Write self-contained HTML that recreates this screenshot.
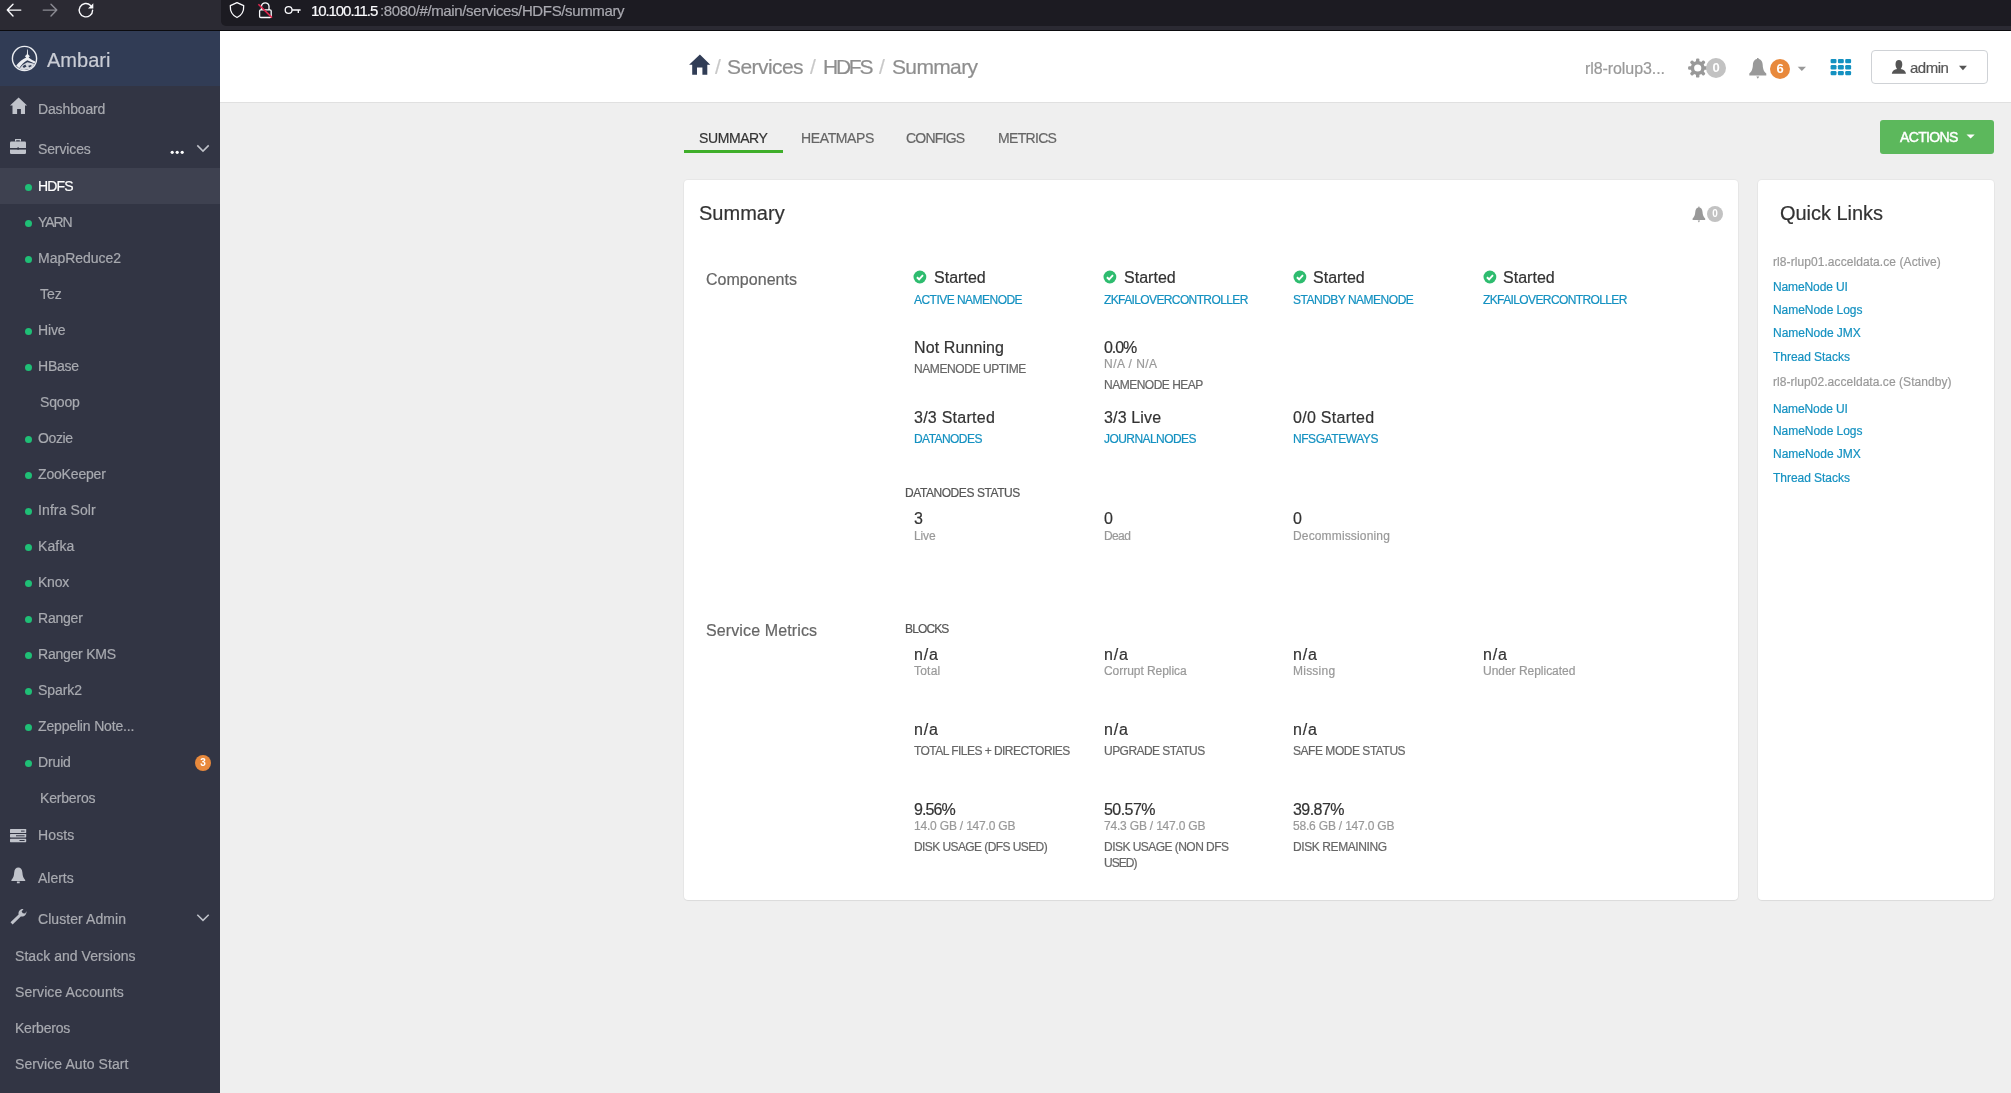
<!DOCTYPE html>
<html><head><meta charset="utf-8"><style>
html,body{margin:0;padding:0;width:2011px;height:1093px;overflow:hidden;background:#efefef;}
body{position:relative;font-family:"Liberation Sans",sans-serif;}
.t{position:absolute;line-height:1;white-space:nowrap;will-change:transform;-webkit-text-stroke:0.2px currentColor;}
svg{position:absolute;}
</style></head><body>
<div style="position:absolute;left:0px;top:0px;width:2011px;height:31px;background:#2b2a33;"></div>
<div style="position:absolute;left:221px;top:0px;width:1790px;height:26px;background:#1c1b22;border-bottom-left-radius:5px;"></div>
<div style="position:absolute;left:0px;top:30px;width:2011px;height:1px;background:#0b0b0e;"></div>
<div style="position:absolute;left:220px;top:31px;width:1791px;height:1062px;background:#efefef;"></div>
<div style="position:absolute;left:220px;top:31px;width:1791px;height:71px;background:#fff;border-bottom:1px solid #e0e0e0;"></div>
<div style="position:absolute;left:0px;top:31px;width:220px;height:1062px;background:#323544;"></div>
<div style="position:absolute;left:0px;top:31px;width:220px;height:55px;background:#313c55;"></div>
<div style="position:absolute;left:0px;top:168px;width:220px;height:36px;background:#3e4150;"></div>
<div style="position:absolute;left:684px;top:180px;width:1054px;height:720px;background:#fff;border-radius:4px;box-shadow:0 0 0 1px rgba(0,0,0,.03),0 1px 1px rgba(0,0,0,.05);"></div>
<div style="position:absolute;left:1758px;top:180px;width:236px;height:720px;background:#fff;border-radius:4px;box-shadow:0 0 0 1px rgba(0,0,0,.03),0 1px 1px rgba(0,0,0,.05);"></div>
<div class="t" style="left:311.00px;top:3.00px;font-size:15px;color:#fbfbfe;letter-spacing:-1.083px;">10.100.11.5</div>
<div class="t" style="left:379.50px;top:3.00px;font-size:15px;color:#a9a9b0;letter-spacing:-0.371px;">:8080/#/main/services/HDFS/summary</div>
<div class="t" style="left:47.20px;top:50.00px;font-size:20px;color:#c9ccd4;letter-spacing:0.030px;">Ambari</div>
<div class="t" style="left:38.00px;top:102.00px;font-size:14px;color:#a8aab0;letter-spacing:-0.136px;">Dashboard</div>
<div class="t" style="left:38.00px;top:142.00px;font-size:14px;color:#a8aab0;letter-spacing:-0.126px;">Services</div>
<div class="t" style="left:38.40px;top:179.00px;font-size:14px;color:#ffffff;letter-spacing:-0.837px;">HDFS</div>
<div class="t" style="left:38.00px;top:215.00px;font-size:14px;color:#a8aab0;letter-spacing:-1.053px;">YARN</div>
<div class="t" style="left:38.00px;top:251.00px;font-size:14px;color:#a8aab0;letter-spacing:-0.031px;">MapReduce2</div>
<div class="t" style="left:40.00px;top:287.00px;font-size:14px;color:#a8aab0;letter-spacing:0.007px;">Tez</div>
<div class="t" style="left:38.00px;top:323.00px;font-size:14px;color:#a8aab0;letter-spacing:-0.169px;">Hive</div>
<div class="t" style="left:38.00px;top:359.00px;font-size:14px;color:#a8aab0;letter-spacing:-0.230px;">HBase</div>
<div class="t" style="left:40.00px;top:395.00px;font-size:14px;color:#a8aab0;letter-spacing:-0.146px;">Sqoop</div>
<div class="t" style="left:38.00px;top:431.00px;font-size:14px;color:#a8aab0;letter-spacing:-0.393px;">Oozie</div>
<div class="t" style="left:38.00px;top:467.00px;font-size:14px;color:#a8aab0;letter-spacing:-0.171px;">ZooKeeper</div>
<div class="t" style="left:38.00px;top:503.00px;font-size:14px;color:#a8aab0;letter-spacing:0.100px;">Infra Solr</div>
<div class="t" style="left:38.00px;top:539.00px;font-size:14px;color:#a8aab0;letter-spacing:0.125px;">Kafka</div>
<div class="t" style="left:38.00px;top:575.00px;font-size:14px;color:#a8aab0;letter-spacing:-0.237px;">Knox</div>
<div class="t" style="left:38.00px;top:611.00px;font-size:14px;color:#a8aab0;letter-spacing:-0.224px;">Ranger</div>
<div class="t" style="left:38.00px;top:647.00px;font-size:14px;color:#a8aab0;letter-spacing:-0.227px;">Ranger KMS</div>
<div class="t" style="left:38.00px;top:683.00px;font-size:14px;color:#a8aab0;letter-spacing:-0.072px;">Spark2</div>
<div class="t" style="left:38.00px;top:719.00px;font-size:14px;color:#a8aab0;letter-spacing:-0.163px;">Zeppelin Note...</div>
<div class="t" style="left:38.00px;top:755.00px;font-size:14px;color:#a8aab0;letter-spacing:-0.139px;">Druid</div>
<div class="t" style="left:40.00px;top:791.00px;font-size:14px;color:#a8aab0;letter-spacing:-0.187px;">Kerberos</div>
<div class="t" style="left:38.00px;top:828.00px;font-size:14px;color:#a8aab0;letter-spacing:0.128px;">Hosts</div>
<div class="t" style="left:38.00px;top:871.00px;font-size:14px;color:#a8aab0;letter-spacing:-0.017px;">Alerts</div>
<div class="t" style="left:38.00px;top:912.00px;font-size:14px;color:#a8aab0;letter-spacing:0.071px;">Cluster Admin</div>
<div class="t" style="left:15.30px;top:949.00px;font-size:14px;color:#a8aab0;letter-spacing:0.044px;">Stack and Versions</div>
<div class="t" style="left:15.30px;top:985.00px;font-size:14px;color:#a8aab0;letter-spacing:0.094px;">Service Accounts</div>
<div class="t" style="left:15.30px;top:1021.00px;font-size:14px;color:#a8aab0;letter-spacing:-0.230px;">Kerberos</div>
<div class="t" style="left:15.30px;top:1057.00px;font-size:14px;color:#a8aab0;letter-spacing:0.079px;">Service Auto Start</div>
<div class="t" style="left:714.60px;top:56.00px;font-size:21px;color:#c8c8c8;">/</div>
<div class="t" style="left:727.00px;top:56.00px;font-size:21px;color:#8e8e8e;letter-spacing:-0.561px;">Services</div>
<div class="t" style="left:809.60px;top:56.00px;font-size:21px;color:#c8c8c8;">/</div>
<div class="t" style="left:822.80px;top:56.00px;font-size:21px;color:#8e8e8e;letter-spacing:-2.256px;">HDFS</div>
<div class="t" style="left:879.20px;top:56.00px;font-size:21px;color:#c8c8c8;">/</div>
<div class="t" style="left:892.40px;top:56.00px;font-size:21px;color:#8e8e8e;letter-spacing:-0.641px;">Summary</div>
<div class="t" style="left:1584.70px;top:61.00px;font-size:16px;color:#999999;letter-spacing:-0.077px;">rl8-rolup3...</div>
<div class="t" style="left:698.75px;top:131.00px;font-size:14px;color:#333333;letter-spacing:-0.401px;">SUMMARY</div>
<div class="t" style="left:800.60px;top:131.00px;font-size:14px;color:#666666;letter-spacing:-0.368px;">HEATMAPS</div>
<div class="t" style="left:906.30px;top:131.00px;font-size:14px;color:#666666;letter-spacing:-0.763px;">CONFIGS</div>
<div class="t" style="left:997.80px;top:131.00px;font-size:14px;color:#666666;letter-spacing:-0.684px;">METRICS</div>
<div style="position:absolute;left:684px;top:150px;width:99px;height:3px;background:#3fae2a;"></div>
<div style="position:absolute;left:1880px;top:120px;width:114px;height:34px;background:#5cb85c;border-radius:3px;"></div>
<div class="t" style="left:1900.00px;top:130.00px;font-size:14px;color:#ffffff;letter-spacing:-0.638px;-webkit-text-stroke:0.45px #fff;">ACTIONS</div>
<div class="t" style="left:698.80px;top:203.00px;font-size:20px;color:#333333;letter-spacing:0.022px;">Summary</div>
<div class="t" style="left:706.20px;top:272.00px;font-size:16px;color:#666666;letter-spacing:0.031px;">Components</div>
<div class="t" style="left:933.60px;top:270.00px;font-size:16px;color:#333333;letter-spacing:0.019px;">Started</div>
<div class="t" style="left:913.90px;top:294.00px;font-size:12px;color:#1491c1;letter-spacing:-0.530px;">ACTIVE NAMENODE</div>
<div class="t" style="left:1123.60px;top:270.00px;font-size:16px;color:#333333;letter-spacing:0.019px;">Started</div>
<div class="t" style="left:1103.90px;top:294.00px;font-size:12px;color:#1491c1;letter-spacing:-0.618px;">ZKFAILOVERCONTROLLER</div>
<div class="t" style="left:1313.00px;top:270.00px;font-size:16px;color:#333333;letter-spacing:0.019px;">Started</div>
<div class="t" style="left:1293.30px;top:294.00px;font-size:12px;color:#1491c1;letter-spacing:-0.496px;">STANDBY NAMENODE</div>
<div class="t" style="left:1502.70px;top:270.00px;font-size:16px;color:#333333;letter-spacing:0.019px;">Started</div>
<div class="t" style="left:1483.00px;top:294.00px;font-size:12px;color:#1491c1;letter-spacing:-0.613px;">ZKFAILOVERCONTROLLER</div>
<div class="t" style="left:913.90px;top:340.00px;font-size:16px;color:#333333;letter-spacing:0.105px;">Not Running</div>
<div class="t" style="left:913.90px;top:363.00px;font-size:12px;color:#666666;letter-spacing:-0.408px;">NAMENODE UPTIME</div>
<div class="t" style="left:1103.90px;top:340.00px;font-size:16px;color:#333333;letter-spacing:-1.057px;">0.0%</div>
<div class="t" style="left:1103.90px;top:358.00px;font-size:12px;color:#999999;letter-spacing:0.469px;">N/A / N/A</div>
<div class="t" style="left:1103.90px;top:379.00px;font-size:12px;color:#666666;letter-spacing:-0.504px;">NAMENODE HEAP</div>
<div class="t" style="left:913.90px;top:410.00px;font-size:16px;color:#333333;letter-spacing:0.252px;">3/3 Started</div>
<div class="t" style="left:913.90px;top:433.00px;font-size:12px;color:#1491c1;letter-spacing:-0.562px;">DATANODES</div>
<div class="t" style="left:1103.90px;top:410.00px;font-size:16px;color:#333333;letter-spacing:0.151px;">3/3 Live</div>
<div class="t" style="left:1103.90px;top:433.00px;font-size:12px;color:#1491c1;letter-spacing:-0.562px;">JOURNALNODES</div>
<div class="t" style="left:1293.30px;top:410.00px;font-size:16px;color:#333333;letter-spacing:0.282px;">0/0 Started</div>
<div class="t" style="left:1293.30px;top:433.00px;font-size:12px;color:#1491c1;letter-spacing:-0.438px;">NFSGATEWAYS</div>
<div class="t" style="left:904.50px;top:487.00px;font-size:12px;color:#555555;letter-spacing:-0.433px;">DATANODES STATUS</div>
<div class="t" style="left:913.90px;top:511.00px;font-size:16px;color:#333333;">3</div>
<div class="t" style="left:913.90px;top:530.00px;font-size:12px;color:#999999;letter-spacing:-0.138px;">Live</div>
<div class="t" style="left:1103.90px;top:511.00px;font-size:16px;color:#333333;">0</div>
<div class="t" style="left:1103.90px;top:530.00px;font-size:12px;color:#999999;letter-spacing:-0.629px;">Dead</div>
<div class="t" style="left:1293.30px;top:511.00px;font-size:16px;color:#333333;">0</div>
<div class="t" style="left:1293.30px;top:530.00px;font-size:12px;color:#999999;letter-spacing:0.150px;">Decommissioning</div>
<div class="t" style="left:706.20px;top:623.00px;font-size:16px;color:#666666;letter-spacing:0.118px;">Service Metrics</div>
<div class="t" style="left:904.50px;top:623.00px;font-size:12px;color:#555555;letter-spacing:-0.877px;">BLOCKS</div>
<div class="t" style="left:913.90px;top:647.00px;font-size:16px;color:#333333;letter-spacing:0.878px;">n/a</div>
<div class="t" style="left:913.90px;top:665.00px;font-size:12px;color:#999999;letter-spacing:0.213px;">Total</div>
<div class="t" style="left:1103.90px;top:647.00px;font-size:16px;color:#333333;letter-spacing:0.878px;">n/a</div>
<div class="t" style="left:1103.90px;top:665.00px;font-size:12px;color:#999999;letter-spacing:-0.048px;">Corrupt Replica</div>
<div class="t" style="left:1293.30px;top:647.00px;font-size:16px;color:#333333;letter-spacing:0.878px;">n/a</div>
<div class="t" style="left:1293.30px;top:665.00px;font-size:12px;color:#999999;letter-spacing:0.237px;">Missing</div>
<div class="t" style="left:1483.00px;top:647.00px;font-size:16px;color:#333333;letter-spacing:0.878px;">n/a</div>
<div class="t" style="left:1483.00px;top:665.00px;font-size:12px;color:#999999;letter-spacing:-0.021px;">Under Replicated</div>
<div class="t" style="left:913.90px;top:722.00px;font-size:16px;color:#333333;letter-spacing:0.878px;">n/a</div>
<div class="t" style="left:913.90px;top:745.00px;font-size:12px;color:#666666;letter-spacing:-0.540px;">TOTAL FILES + DIRECTORIES</div>
<div class="t" style="left:1103.90px;top:722.00px;font-size:16px;color:#333333;letter-spacing:0.878px;">n/a</div>
<div class="t" style="left:1103.90px;top:745.00px;font-size:12px;color:#666666;letter-spacing:-0.541px;">UPGRADE STATUS</div>
<div class="t" style="left:1293.30px;top:722.00px;font-size:16px;color:#333333;letter-spacing:0.878px;">n/a</div>
<div class="t" style="left:1293.30px;top:745.00px;font-size:12px;color:#666666;letter-spacing:-0.465px;">SAFE MODE STATUS</div>
<div class="t" style="left:913.90px;top:802.00px;font-size:16px;color:#333333;letter-spacing:-0.892px;">9.56%</div>
<div class="t" style="left:913.90px;top:820.00px;font-size:12px;color:#999999;letter-spacing:-0.190px;">14.0 GB / 147.0 GB</div>
<div class="t" style="left:913.90px;top:841.00px;font-size:12px;color:#666666;letter-spacing:-0.583px;">DISK USAGE (DFS USED)</div>
<div class="t" style="left:1103.90px;top:802.00px;font-size:16px;color:#333333;letter-spacing:-0.553px;">50.57%</div>
<div class="t" style="left:1103.90px;top:820.00px;font-size:12px;color:#999999;letter-spacing:-0.190px;">74.3 GB / 147.0 GB</div>
<div class="t" style="left:1103.90px;top:841.00px;font-size:12px;color:#666666;letter-spacing:-0.538px;">DISK USAGE (NON DFS</div>
<div class="t" style="left:1293.30px;top:802.00px;font-size:16px;color:#333333;letter-spacing:-0.553px;">39.87%</div>
<div class="t" style="left:1293.30px;top:820.00px;font-size:12px;color:#999999;letter-spacing:-0.190px;">58.6 GB / 147.0 GB</div>
<div class="t" style="left:1293.30px;top:841.00px;font-size:12px;color:#666666;letter-spacing:-0.411px;">DISK REMAINING</div>
<div class="t" style="left:1103.90px;top:857.00px;font-size:12px;color:#666666;letter-spacing:-0.959px;">USED)</div>
<div class="t" style="left:1780.40px;top:203.00px;font-size:20px;color:#333333;letter-spacing:-0.037px;">Quick Links</div>
<div class="t" style="left:1772.80px;top:256.00px;font-size:12px;color:#999999;letter-spacing:0.074px;">rl8-rlup01.acceldata.ce (Active)</div>
<div class="t" style="left:1772.80px;top:281.00px;font-size:12px;color:#1491c1;letter-spacing:-0.113px;">NameNode UI</div>
<div class="t" style="left:1772.80px;top:304.00px;font-size:12px;color:#1491c1;letter-spacing:-0.046px;">NameNode Logs</div>
<div class="t" style="left:1772.80px;top:327.00px;font-size:12px;color:#1491c1;letter-spacing:-0.021px;">NameNode JMX</div>
<div class="t" style="left:1772.80px;top:351.00px;font-size:12px;color:#1491c1;letter-spacing:-0.039px;">Thread Stacks</div>
<div class="t" style="left:1772.80px;top:376.00px;font-size:12px;color:#999999;letter-spacing:0.054px;">rl8-rlup02.acceldata.ce (Standby)</div>
<div class="t" style="left:1772.80px;top:403.00px;font-size:12px;color:#1491c1;letter-spacing:-0.113px;">NameNode UI</div>
<div class="t" style="left:1772.80px;top:425.00px;font-size:12px;color:#1491c1;letter-spacing:-0.046px;">NameNode Logs</div>
<div class="t" style="left:1772.80px;top:448.00px;font-size:12px;color:#1491c1;letter-spacing:-0.021px;">NameNode JMX</div>
<div class="t" style="left:1772.80px;top:472.00px;font-size:12px;color:#1491c1;letter-spacing:-0.039px;">Thread Stacks</div>
<svg style="left:0px;top:0px" width="110" height="26" viewBox="0 0 110 26"><g fill="none" stroke-width="1.4" stroke-linecap="round" stroke-linejoin="round"><path d="M7.3 10.1H20.8M13 4.3L7.3 10.1L13 15.9" stroke="#fbfbfe"/><path d="M43.2 10.1H56.8M51 4.3L56.8 10.1L51 15.9" stroke="#8c8c94"/><path d="M92.6 10.2A6.7 6.7 0 1 1 90.6 5.4" stroke="#fbfbfe"/></g><path d="M93.3 3.2V8.5H88Z" fill="#fbfbfe"/></svg>
<svg style="left:221px;top:0px" width="90" height="24" viewBox="0 0 90 24"><g fill="none" stroke="#fbfbfe" stroke-width="1.3" stroke-linejoin="round"><path d="M16 2.6L22.7 5.6C23 11.5 20.8 15.3 16 17.5C11.2 15.3 9 11.5 9.3 5.6Z"/><rect x="38.6" y="9.9" width="11.6" height="7.6" rx="1.2"/><path d="M40.5 9.9V6A3.8 3.8 0 0 1 48 6V9.9"/><circle cx="67.6" cy="10" r="3.4"/><path d="M71 10H79.6M77.3 10V13"/></g><path d="M37.4 4.3L51 17.6" stroke="#e22850" stroke-width="1.6"/></svg>
<svg style="left:10px;top:44px" width="30" height="30" viewBox="0 0 30 30"><circle cx="14.5" cy="14.5" r="12.1" fill="none" stroke="#eceef2" stroke-width="1.4"/><path d="M17.1 5.6H17.8L18 10.2L19.9 12.2L18.6 13.4Q22 16.2 25.3 17.4L24.6 19.4Q20.5 17.8 17.3 16.3Q12.5 18.8 9.2 24.3L6.2 21.6Q10.5 15.8 16.2 13.4L14.9 12.2L16.9 10.2Z" fill="#eceef2"/><path d="M9.5 24.6Q13 19.8 17.3 18.2Q21 18.8 24.2 19.8L22.8 23.2Q18 26.8 11.5 25.8Z" fill="#d5d8df"/><path d="M12.6 22.3L15.2 20.6L16.6 22.6L13.8 24ZM18.3 21.8L21.2 20.9L21.6 22.3L19 23.4Z" fill="#313c55"/></svg>
<svg style="left:8px;top:95px" width="22" height="22" viewBox="0 0 22 22"><path d="M10.6 2.5L19.1 10.6H17V19.1H12.9V13.9H9.1V19.1H4.5V10.6H2Z" fill="#c0c3cb"/></svg>
<svg style="left:8px;top:136px" width="22" height="22" viewBox="0 0 22 22"><path d="M7 3H13V5.5H11.8V4.2H8.2V5.5H7Z" fill="#c0c3cb"/><rect x="2" y="5.5" width="16" height="12.4" rx="1.2" fill="#c0c3cb"/><rect x="2" y="12" width="16" height="1.6" fill="#323544"/><rect x="9.3" y="11.4" width="1.7" height="2.2" fill="#323544"/></svg>
<svg style="left:168px;top:140px" width="50" height="20" viewBox="0 0 50 20"><circle cx="4.2" cy="12.3" r="1.6" fill="#fff"/><circle cx="9.2" cy="12.3" r="1.6" fill="#fff"/><circle cx="14.2" cy="12.3" r="1.6" fill="#fff"/><path d="M29.3 5.4L35 11.1L40.7 5.4" fill="none" stroke="#c0c3cb" stroke-width="1.5"/></svg>
<div style="position:absolute;left:25px;top:183.5px;width:7px;height:7px;background:#1fbf76;border-radius:50%;"></div>
<div style="position:absolute;left:25px;top:219.6px;width:7px;height:7px;background:#1fbf76;border-radius:50%;"></div>
<div style="position:absolute;left:25px;top:255.6px;width:7px;height:7px;background:#1fbf76;border-radius:50%;"></div>
<div style="position:absolute;left:25px;top:327.5px;width:7px;height:7px;background:#1fbf76;border-radius:50%;"></div>
<div style="position:absolute;left:25px;top:363.5px;width:7px;height:7px;background:#1fbf76;border-radius:50%;"></div>
<div style="position:absolute;left:25px;top:435.5px;width:7px;height:7px;background:#1fbf76;border-radius:50%;"></div>
<div style="position:absolute;left:25px;top:471.5px;width:7px;height:7px;background:#1fbf76;border-radius:50%;"></div>
<div style="position:absolute;left:25px;top:507.5px;width:7px;height:7px;background:#1fbf76;border-radius:50%;"></div>
<div style="position:absolute;left:25px;top:543.5px;width:7px;height:7px;background:#1fbf76;border-radius:50%;"></div>
<div style="position:absolute;left:25px;top:579.5px;width:7px;height:7px;background:#1fbf76;border-radius:50%;"></div>
<div style="position:absolute;left:25px;top:615.5px;width:7px;height:7px;background:#1fbf76;border-radius:50%;"></div>
<div style="position:absolute;left:25px;top:651.5px;width:7px;height:7px;background:#1fbf76;border-radius:50%;"></div>
<div style="position:absolute;left:25px;top:687.5px;width:7px;height:7px;background:#1fbf76;border-radius:50%;"></div>
<div style="position:absolute;left:25px;top:723.5px;width:7px;height:7px;background:#1fbf76;border-radius:50%;"></div>
<div style="position:absolute;left:25px;top:759.5px;width:7px;height:7px;background:#1fbf76;border-radius:50%;"></div>
<div style="position:absolute;left:195px;top:755px;width:16px;height:16px;border-radius:50%;background:#e8893c;color:#fff;font-size:10px;font-weight:bold;line-height:16px;text-align:center;will-change:transform;">3</div>
<svg style="left:8px;top:826px" width="22" height="20" viewBox="0 0 22 20"><g fill="#c0c3cb"><rect x="2" y="3" width="16.2" height="4" rx=".6"/><rect x="2" y="8" width="16.2" height="3.4" rx=".6"/><rect x="2" y="12.8" width="16.2" height="3.4" rx=".6"/></g><g fill="#323544"><rect x="13" y="4.6" width="3.6" height="1"/><rect x="8" y="9.3" width="8.6" height="1"/><rect x="11.5" y="14" width="5.1" height="1"/></g></svg>
<svg style="left:8px;top:865px" width="22" height="22" viewBox="0 0 22 22"><path d="M10.3 2.6C12.5 2.6 14.2 4.2 14.4 7.6C14.6 11.6 15.5 13.4 17.2 14.9V16H3.4V14.9C5.1 13.4 6 11.6 6.2 7.6C6.4 4.2 8.1 2.6 10.3 2.6Z M8.9 16.6H11.7V18.3H8.9Z" fill="#c0c3cb"/></svg>
<svg style="left:6.5px;top:906px" width="22" height="22" viewBox="0 0 22 22"><path d="M3.5 16.2L11.6 8.4C10.9 5.5 13.2 2.6 16.5 3L14.6 5.4L15.8 7.3L18.2 7.4L19.4 5.2C19.9 8.6 17 11 13.8 10.4L5.6 18.4Z" fill="#c0c3cb"/></svg>
<svg style="left:190px;top:908px" width="30" height="20" viewBox="0 0 30 20"><path d="M7.3 6.7L13 12.4L18.7 6.7" fill="none" stroke="#c0c3cb" stroke-width="1.5"/></svg>
<svg style="left:686px;top:52px" width="28" height="26" viewBox="0 0 28 26"><path d="M13.9 2.4L24.3 12.8H21.3V22.8H16.4V15.6H11V22.8H6.2V12.8H3.1Z" fill="#313d56"/></svg>
<svg style="left:1686px;top:56px" width="24" height="24" viewBox="0 0 24 24"><g fill="#999"><rect x="10" y="2.4" width="3.4" height="6" rx="1.2" transform="rotate(0 11.7 12)"/><rect x="10" y="2.4" width="3.4" height="6" rx="1.2" transform="rotate(45 11.7 12)"/><rect x="10" y="2.4" width="3.4" height="6" rx="1.2" transform="rotate(90 11.7 12)"/><rect x="10" y="2.4" width="3.4" height="6" rx="1.2" transform="rotate(135 11.7 12)"/><rect x="10" y="2.4" width="3.4" height="6" rx="1.2" transform="rotate(180 11.7 12)"/><rect x="10" y="2.4" width="3.4" height="6" rx="1.2" transform="rotate(225 11.7 12)"/><rect x="10" y="2.4" width="3.4" height="6" rx="1.2" transform="rotate(270 11.7 12)"/><rect x="10" y="2.4" width="3.4" height="6" rx="1.2" transform="rotate(315 11.7 12)"/><circle cx="11.7" cy="12" r="7"/></g><circle cx="11.7" cy="12" r="3.6" fill="#fff"/></svg>
<div style="position:absolute;left:1706px;top:58px;width:20px;height:20px;border-radius:50%;background:#c2c2c2;color:#fff;font-size:13px;font-weight:bold;line-height:20px;text-align:center;will-change:transform;font-family:"Liberation Sans",sans-serif;">0</div>
<svg style="left:1746px;top:56px" width="24" height="24" viewBox="0 0 24 24"><path d="M11.8 3C14.5 3 16.5 5 16.7 8.8C16.9 13.5 18 15.6 20.3 17.6V19.6H3.3V17.6C5.6 15.6 6.7 13.5 6.9 8.8C7.1 5 9.1 3 11.8 3Z M10.3 20.4H13.3L11.8 22.7Z" fill="#999"/><rect x="11" y="2" width="1.6" height="2" fill="#999"/></svg>
<div style="position:absolute;left:1770px;top:59px;width:20px;height:20px;border-radius:50%;background:#e8893c;color:#fff;font-size:13px;font-weight:bold;line-height:20px;text-align:center;will-change:transform;font-family:"Liberation Sans",sans-serif;">6</div>
<svg style="left:1796px;top:64px" width="12" height="10" viewBox="0 0 12 10"><path d="M1.7 2.8H10L5.85 7.1Z" fill="#999"/></svg>
<svg style="left:1828px;top:56px" width="26" height="22" viewBox="0 0 26 22"><rect x="2.6" y="2.9" width="5.9" height="4.3" rx="1.2" fill="#1491c1"/><rect x="2.6" y="9.1" width="5.9" height="4.3" rx="1.2" fill="#1491c1"/><rect x="2.6" y="15.0" width="5.9" height="4.3" rx="1.2" fill="#1491c1"/><rect x="9.9" y="2.9" width="5.9" height="4.3" rx="1.2" fill="#1491c1"/><rect x="9.9" y="9.1" width="5.9" height="4.3" rx="1.2" fill="#1491c1"/><rect x="9.9" y="15.0" width="5.9" height="4.3" rx="1.2" fill="#1491c1"/><rect x="17.2" y="2.9" width="5.9" height="4.3" rx="1.2" fill="#1491c1"/><rect x="17.2" y="9.1" width="5.9" height="4.3" rx="1.2" fill="#1491c1"/><rect x="17.2" y="15.0" width="5.9" height="4.3" rx="1.2" fill="#1491c1"/></svg>
<div style="position:absolute;left:1871px;top:50px;width:115px;height:32px;border:1px solid #cfd2d6;border-radius:4px;background:#fff;box-sizing:content-box;"></div>
<div class="t" style="left:1910.00px;top:60.00px;font-size:15px;color:#555555;letter-spacing:-0.489px;">admin</div>
<svg style="left:1889px;top:58px" width="20" height="18" viewBox="0 0 20 18"><path d="M9.9 2C12 2 13.3 3.6 13.3 6.2C13.3 8.3 12.5 10 11.6 10.9C14.6 11.5 16.8 12.9 17 15.7H2.8C3 12.9 5.2 11.5 8.2 10.9C7.3 10 6.5 8.3 6.5 6.2C6.5 3.6 7.8 2 9.9 2Z" fill="#555"/></svg>
<svg style="left:1956px;top:62px" width="14" height="10" viewBox="0 0 14 10"><path d="M3 3.7H10.9L6.95 8.2Z" fill="#555"/></svg>
<svg style="left:1964px;top:132px" width="14" height="10" viewBox="0 0 14 10"><path d="M2.5 2.4H10.7L6.6 6.6Z" fill="#fff"/></svg>
<svg style="left:1690px;top:204px" width="18" height="22" viewBox="0 0 18 22"><path d="M8.9 3.4C10.9 3.4 12.3 4.9 12.5 7.8C12.7 11.4 13.5 12.9 15.2 14.4V15.9H2.6V14.4C4.3 12.9 5.1 11.4 5.3 7.8C5.5 4.9 6.9 3.4 8.9 3.4Z M7.7 16.5H10.1L8.9 18.6Z" fill="#999"/><rect x="8.3" y="2.6" width="1.2" height="1.6" fill="#999"/></svg>
<div style="position:absolute;left:1707px;top:206px;width:16px;height:16px;border-radius:50%;background:#c2c2c2;color:#fff;font-size:10px;font-weight:bold;line-height:16px;text-align:center;will-change:transform;">0</div>
<svg style="left:913.4px;top:270px" width="14" height="14" viewBox="0 0 14 14"><circle cx="6.9" cy="7" r="6.4" fill="#2ebc6f"/><path d="M3.9 7.2L6.1 9.3L10 5.2" fill="none" stroke="#fff" stroke-width="1.9"/></svg>
<svg style="left:1103.4px;top:270px" width="14" height="14" viewBox="0 0 14 14"><circle cx="6.9" cy="7" r="6.4" fill="#2ebc6f"/><path d="M3.9 7.2L6.1 9.3L10 5.2" fill="none" stroke="#fff" stroke-width="1.9"/></svg>
<svg style="left:1292.8px;top:270px" width="14" height="14" viewBox="0 0 14 14"><circle cx="6.9" cy="7" r="6.4" fill="#2ebc6f"/><path d="M3.9 7.2L6.1 9.3L10 5.2" fill="none" stroke="#fff" stroke-width="1.9"/></svg>
<svg style="left:1482.5px;top:270px" width="14" height="14" viewBox="0 0 14 14"><circle cx="6.9" cy="7" r="6.4" fill="#2ebc6f"/><path d="M3.9 7.2L6.1 9.3L10 5.2" fill="none" stroke="#fff" stroke-width="1.9"/></svg>
</body></html>
